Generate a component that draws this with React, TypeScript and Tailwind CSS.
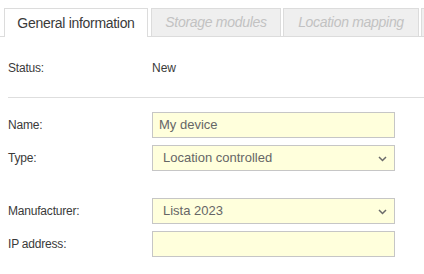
import React from "react";

const Chevron = () => (
  <svg width="9" height="6" viewBox="0 0 9 6" className="absolute right-[7px] top-[10px]">
    <path d="M1 1 L4.5 4.5 L8 1" fill="none" stroke="#6a6a6a" strokeWidth="1.5" />
  </svg>
);

function Row({ label, children, className = "" }: { label: string; children: React.ReactNode; className?: string }) {
  return (
    <div className={"flex items-center h-[26px] " + className}>
      <div className="w-[144px] text-[12px] text-[#3a3a3a] tracking-[-0.2px]">{label}</div>
      {children}
    </div>
  );
}

export default function App() {
  return (
    <div className="w-[424px] h-[274px] bg-white overflow-hidden" style={{ fontFamily: '"Liberation Sans", Arial, sans-serif' }}>
      <div className="flex items-end pt-[8px] border-b border-[#dcdcdc] h-[37px] w-[600px]">
        <div className="ml-[4px] w-[144px] h-[29px] -mb-px bg-white border border-b-0 border-[#dcdcdc] flex items-center justify-center text-[14px] tracking-[-0.3px] text-[#3a3a3a] shrink-0">
          General information
        </div>
        <div className="ml-[3px] w-[130px] h-[28px] bg-[#efefef] border border-b-0 border-[#dcdcdc] flex items-center justify-center text-[14px] tracking-[-0.3px] italic text-[#c2c2c2] shrink-0">
          Storage modules
        </div>
        <div className="ml-[2px] w-[136px] h-[28px] bg-[#efefef] border border-b-0 border-[#dcdcdc] flex items-center justify-center text-[14px] tracking-[-0.3px] italic text-[#c2c2c2] shrink-0">
          Location mapping
        </div>
        <div className="ml-[2px] w-[120px] h-[28px] bg-[#efefef] border border-b-0 border-[#dcdcdc] shrink-0" />
      </div>
      <div className="pl-[8px]">
        <div className="flex items-center h-[24px] mt-[19px] text-[12px] text-[#3a3a3a]">
          <div className="w-[144px] tracking-[-0.2px]">Status:</div>
          <div>New</div>
        </div>
        <div className="mt-[17px] border-t border-[#dedede]" />
        <Row label="Name:" className="mt-[14px]">
          <div className="w-[243px] h-[26px] bg-[#ffffdc] border border-[#c6c6c6] flex items-center pl-[6px] text-[13px] text-[#666]">
            My device
          </div>
        </Row>
        <Row label="Type:" className="mt-[7px]">
          <div className="relative w-[243px] h-[26px] bg-[#ffffdc] border border-[#c6c6c6] flex items-center pl-[10px] text-[13px] text-[#666]">
            Location controlled
            <Chevron />
          </div>
        </Row>
        <Row label="Manufacturer:" className="mt-[27px]">
          <div className="relative w-[243px] h-[26px] bg-[#ffffdc] border border-[#c6c6c6] flex items-center pl-[10px] text-[13px] text-[#666]">
            Lista 2023
            <Chevron />
          </div>
        </Row>
        <Row label="IP address:" className="mt-[7px]">
          <div className="w-[243px] h-[26px] bg-[#ffffdc] border border-[#c6c6c6]" />
        </Row>
      </div>
    </div>
  );
}
